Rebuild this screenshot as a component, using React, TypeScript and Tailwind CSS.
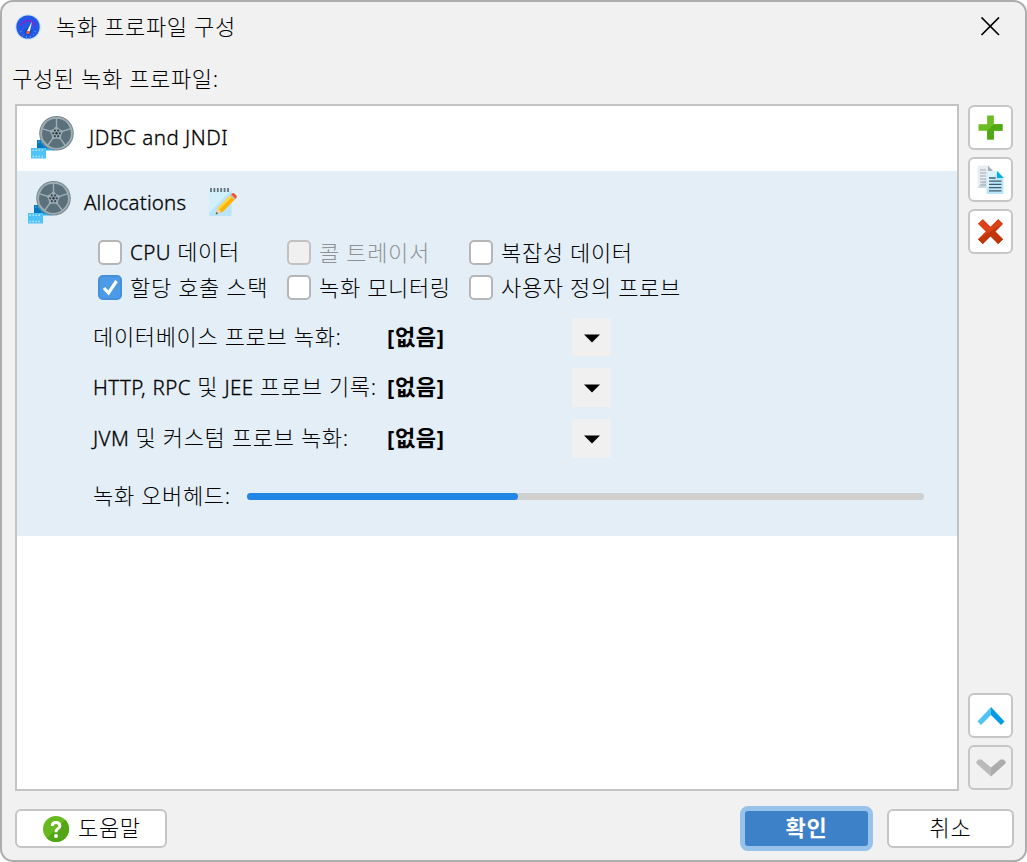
import { useState } from "react";
import type { ReactNode } from "react";

interface Option {
  id: string;
  label: string;
  checked: boolean;
  disabled?: boolean;
}

interface Probe {
  label: string;
  height: string;
}

const OPTIONS: Option[] = [
  { id: "cpu", label: "CPU 데이터", checked: false },
  { id: "call", label: "콜 트레이서", checked: false, disabled: true },
  { id: "complexity", label: "복잡성 데이터", checked: false },
  { id: "alloc", label: "할당 호출 스택", checked: true },
  { id: "monitor", label: "녹화 모니터링", checked: false },
  { id: "custom", label: "사용자 정의 프로브", checked: false },
];

const PROBES: Probe[] = [
  { label: "데이터베이스 프로브 녹화:", height: "h-[38px]" },
  { label: "HTTP, RPC 및 JEE 프로브 기록:", height: "h-[39px]" },
  { label: "JVM 및 커스텀 프로브 녹화:", height: "h-[39px]" },
];

const OVERHEAD = 40;

// Latin runs are set a little smaller and heavier than the Hangul around them
function Label({ children }: { children: string }) {
  return (
    <>
      {children.split(/([A-Za-z,]+)/).map((part, i) =>
        i % 2 ? (
          <span key={i} className="text-[20.5px] tracking-[0.4px] [-webkit-text-stroke:0.3px]">{part}</span>
        ) : (
          part
        )
      )}
    </>
  );
}

function GaugeIcon() {
  return (
    <svg width="26" height="26" viewBox="0 0 26 26">
      <circle cx="13" cy="13" r="12.6" fill="#b5dbf8" />
      <circle cx="13" cy="13" r="11.600" fill="#2457e6" />
      <path d="M5.500 12A8 8 0 0 1 20.500 12" fill="none" stroke="#7b2bd0" strokeWidth="1.800" />
      <circle cx="13" cy="17.500" r="3.500" fill="#1b49c4" />
      <path d="M17 7.500L11.800 17.500h3z" fill="#fff" />
      <circle cx="13" cy="18.500" r="1.700" fill="#f0623a" />
      <path d="M5 18l1.500-.5M7.500 21.500l1-1M11.500 23.500v-1.500M15.500 23.500l-.5-1.500M19 21l-1-1M21 18l-1.500-.5" stroke="#4fa5f5" strokeWidth="1" />
    </svg>
  );
}

function ReelIcon() {
  const spokes = [0, 72, 144, 216, 288];
  const holes = [0, 60, 120, 180, 240, 300];
  return (
    <svg width="44" height="44" viewBox="0 0 44 44" className="shrink-0">
      <path d="M6 25h14v10H6z" fill="#0277bd" />
      <path d="M7 25l8 10h9v-2h-6z" fill="#0288d1" />
      <path d="M15 33.600h9v1.800h-9z" fill="#29b6f6" />
      <path d="M0 33h15v10.500H0z" fill="#4fc3f7" />
      <path d="M1.500 35.200h12M1.500 41.500h12" stroke="#b3e5fc" strokeWidth="1.500" strokeDasharray="1.500 1.500" />
      <path d="M7 27h5" stroke="#4fc3f7" strokeWidth="1.200" strokeDasharray="1.500 1.500" />
      <circle cx="25.500" cy="18.300" r="17.300" fill="#78888f" />
      <circle cx="25.500" cy="18.300" r="16.300" fill="#a0aeb5" />
      {spokes.map((a) => (
        <path
          key={a}
          d="M22 12.300L17.600 6.200Q25.500 1.200 33.400 6.200L29 12.300Q25.500 14 22 12.300z"
          fill="#5a717c"
          transform={`rotate(${a + 36} 25.5 18.3)`}
        />
      ))}
      <circle cx="25.500" cy="18.300" r="5.300" fill="#97a7af" />
      <circle cx="25.500" cy="18.300" r="1.200" fill="#263238" />
      {holes.map((a) => (
        <circle key={a} cx="25.500" cy="15" r="1.100" fill="#37474f" transform={`rotate(${a + 30} 25.5 18.3)`} />
      ))}
    </svg>
  );
}

function EditIcon() {
  return (
    <svg width="30" height="30" viewBox="0 0 30 30">
      <path d="M1 3h22.500v26H1z" fill="#b9e5fb" />
      <path d="M1 3h22.500L1 26z" fill="#d3effc" />
      <path d="M3 1v4M6.400 1v4M9.800 1v4M13.200 1v4M16.600 1v4M20 1v4" stroke="#607580" strokeWidth="1.800" />
      <path d="M7.500 27.500l2-6.500 4.500 4.500z" fill="#f5cf9b" />
      <path d="M7.500 27.500l.8-2.600 1.800 1.800z" fill="#455a64" />
      <path d="M9.500 21L22.200 8.300l4.500 4.500L14 25.500z" fill="#ffb300" />
      <path d="M9.500 21L22.200 8.300l1.700 1.700L11.200 22.700z" fill="#ffd54f" />
      <path d="M22.200 8.300l1.500-1.500 4.500 4.500-1.500 1.500z" fill="#b0bec5" />
      <path d="M23.200 7.300l.7-.7q1.200-1 2.400 0l2 2q1 1.200 0 2.400l-.7.700z" fill="#f4512c" />
    </svg>
  );
}

function PlusIcon() {
  return (
    <svg width="25" height="25" viewBox="0 0 26 26">
      <path d="M9.500 .5h7v9h9v7h-9v9h-7v-9h-9v-7h9z" fill="#6cbd21" />
      <path d="M16.500 9.500h9v7h-9v9h-7v-9z" fill="#50a815" />
    </svg>
  );
}

function CopyIcon() {
  return (
    <svg width="27" height="29" viewBox="0 0 27 29">
      <path d="M.5 .5h10.500L16 5.500v17.500H.5z" fill="#e9edf1" />
      <path d="M16 5.500V23H.5z" fill="#cfd8dc" />
      <path d="M11 .5l5 5.500h-5z" fill="#a5b0b5" />
      <path d="M3 5h6M3 8h9M3 11h6M3 14h6M3 17h6M3 20h6" stroke="#a0abb1" strokeWidth="1.200" />
      <path d="M9.500 6H21l5.500 6v17h-17z" fill="#b9e7fc" />
      <path d="M9.500 6H21L9.500 25z" fill="#d9f2fd" />
      <path d="M20 6l6.500 7H20z" fill="#03a9f4" />
      <path d="M12 13h6.500M12 16.200h12.500M12 19.400h12.500M12 22.600h12.500M12 25.800h12.500" stroke="#435c68" strokeWidth="1.300" />
    </svg>
  );
}

function DeleteIcon() {
  return (
    <svg width="27" height="27" viewBox="0 0 28 28">
      <path d="M6 1l8 8 8-8 5 5-8 8 8 8-5 5-8-8-8 8-5-5 8-8-8-8z" fill="#db4218" />
      <path d="M27 6l-8 8 8 8-5 5-8-8-8 8-5-5z" fill="#bf360c" />
    </svg>
  );
}

function UpIcon() {
  return (
    <svg width="28" height="20" viewBox="0 0 28 20">
      <path d="M14 1v8L4 19l-3.500-3.500z" fill="#4fc3f7" />
      <path d="M14 1l13.500 14.500L24 19 14 9z" fill="#039be5" />
    </svg>
  );
}

function DownIcon() {
  return (
    <svg width="30" height="18" viewBox="0 0 30 18">
      <path d="M.5 4.500V2.500L2.500 .5h3L15 8.500v9z" fill="#bababa" />
      <path d="M29.500 4.500V2.500L27.500 .5h-3L15 8.500v9z" fill="#acacac" />
    </svg>
  );
}

function HelpIcon() {
  return (
    <svg width="26" height="26" viewBox="0 0 26 26">
      <circle cx="13" cy="13" r="13" fill="#68b91f" />
      <path d="M22.200 3.800A13 13 0 0 1 3.800 22.200z" fill="#52a615" />
      <path d="M9.300 10Q9.300 6.500 13 6.500T16.900 9.800Q16.900 11.700 14.900 12.800T13 16.200" fill="none" stroke="#fff" strokeWidth="3" />
      <circle cx="13" cy="20" r="2" fill="#fff" />
    </svg>
  );
}

function ToolButton({ className, children }: { className: string; children: ReactNode }) {
  return (
    <button
      className={`w-[45px] h-[45px] shrink-0 flex items-center justify-center rounded-[6px] border-2 border-[#c6c6c6] ${className}`}
    >
      {children}
    </button>
  );
}

function CheckOption({ option, onToggle }: { option: Option; onToggle: () => void }) {
  const box = option.disabled
    ? "bg-[#f0f0f0] border-[#c2c2c2]"
    : option.checked
      ? "bg-[#4d9be6] border-[#4590dc]"
      : "bg-white border-[#b6b6b6]";

  return (
    <button className="h-[35px] flex items-center" onClick={onToggle} disabled={option.disabled}>
      <span className={`w-[24px] h-[25px] shrink-0 rounded-[5px] border-2 flex items-center justify-center ${box}`}>
        {option.checked && (
          <svg width="17" height="17" viewBox="0 0 17 17">
            <path d="M2 9l4.500 5L14.500 2" fill="none" stroke="#fff" strokeWidth="3.200" />
          </svg>
        )}
      </span>
      <span className={`ml-[8px] pb-[2px] whitespace-nowrap ${option.disabled ? "text-[#8f9295]" : ""}`}>
        <Label>{option.label}</Label>
      </span>
    </button>
  );
}

export default function App() {
  const [options, setOptions] = useState(OPTIONS);

  const toggle = (id: string) =>
    setOptions((prev) => prev.map((o) => (o.id === id ? { ...o, checked: !o.checked } : o)));

  return (
    <div className="w-[1027px] h-[862px] overflow-hidden flex flex-col rounded-[13px] border-2 border-[#adadad] bg-[#f1f1f1] font-['Noto_Sans','Noto_Sans_CJK_KR',sans-serif] font-light text-[22px] leading-[30px] tracking-[0.65px] text-black">
      <header className="h-[50px] shrink-0 pl-[13px] pr-[25px] flex items-center">
        <GaugeIcon />
        <h1 className="ml-[15px] pb-[2px] flex-1">녹화 프로파일 구성</h1>
        <svg width="20" height="20" viewBox="0 0 20 20">
          <path d="M1.500 .5l17.500 17.500M19 .5L1.500 18" stroke="#000" strokeWidth="1.700" />
        </svg>
      </header>

      <div className="h-[52px] shrink-0 pl-[10px] flex items-center">
        <span>구성된 녹화 프로파일:</span>
      </div>

      <main className="h-[687px] shrink-0 pl-[13px] flex">
        <div className="w-[944px] shrink-0 border-2 border-[#c3c3c3] bg-white">
          <div className="h-[65px] pl-[14px] pb-[3px] flex items-center">
            <ReelIcon />
            <span className="ml-[14px] text-[20.5px] tracking-[0.5px] [-webkit-text-stroke:0.3px]">JDBC and JNDI</span>
          </div>

          <div className="h-[365px] bg-[#e3eef7]">
            <div className="h-[64px] pl-[11px] pb-[2px] flex items-center">
              <ReelIcon />
              <span className="ml-[12px] w-[102px] whitespace-nowrap text-[20.5px] tracking-[0.15px] [-webkit-text-stroke:0.3px]">Allocations</span>
              <span className="ml-[22px]"><EditIcon /></span>
            </div>

            <div className="pl-[81px] grid grid-cols-[189px_182px_250px]">
              {options.map((o) => (
                <CheckOption key={o.id} option={o} onToggle={() => toggle(o.id)} />
              ))}
            </div>

            <div className="mt-[13px] pl-[76px] flex flex-col gap-[12px]">
              {PROBES.map((p) => (
                <div key={p.label} className={`${p.height} flex items-center`}>
                  <span className="w-[294px] pb-[2px] whitespace-nowrap"><Label>{p.label}</Label></span>
                  <span className="w-[185px] pb-[3px] font-bold">[없음]</span>
                  <button className="w-[39px] self-stretch flex items-center justify-center bg-[#f0f0f0] pt-[2px]">
                    <svg width="16" height="9" viewBox="0 0 16 9">
                      <path d="M0 .5h16L8 8.500z" fill="#000" />
                    </svg>
                  </button>
                </div>
              ))}
            </div>

            <div className="mt-[22px] h-[32px] pl-[76px] flex items-center">
              <span className="w-[154px] pb-[2px] whitespace-nowrap">녹화 오버헤드:</span>
              <div className="w-[677px] h-[7px] rounded-full bg-[#cfcfcf]">
                <div className="h-full rounded-full bg-[#2286e4]" style={{ width: `${OVERHEAD}%` }} />
              </div>
            </div>
          </div>
        </div>

        <aside className="ml-[9px] pt-[1px] pb-[1px] flex flex-col gap-[7px]">
          <ToolButton className="bg-white"><PlusIcon /></ToolButton>
          <ToolButton className="bg-white"><CopyIcon /></ToolButton>
          <ToolButton className="bg-white"><DeleteIcon /></ToolButton>
          <ToolButton className="mt-auto bg-white"><UpIcon /></ToolButton>
          <ToolButton className="bg-[#f1f1f1]"><DownIcon /></ToolButton>
        </aside>
      </main>

      <footer className="flex-1 pl-[13px] pr-[11px] pt-[6px] flex items-center">
        <button className="w-[152px] h-[39px] flex items-center rounded-[6px] border-2 border-[#c4c4c4] bg-white pl-[26px]">
          <HelpIcon />
          <span className="ml-[9px] pb-[4px]">도움말</span>
        </button>
        <button className="ml-auto w-[133px] h-[45px] flex items-center justify-center rounded-[8px] border-[5px] border-[#97c3ea] bg-[#3d82c8] pb-[4px] font-bold text-white">
          확인
        </button>
        <button className="ml-[14px] w-[127px] h-[39px] flex items-center justify-center rounded-[6px] border-2 border-[#c4c4c4] bg-white pb-[4px]">
          취소
        </button>
      </footer>
    </div>
  );
}
